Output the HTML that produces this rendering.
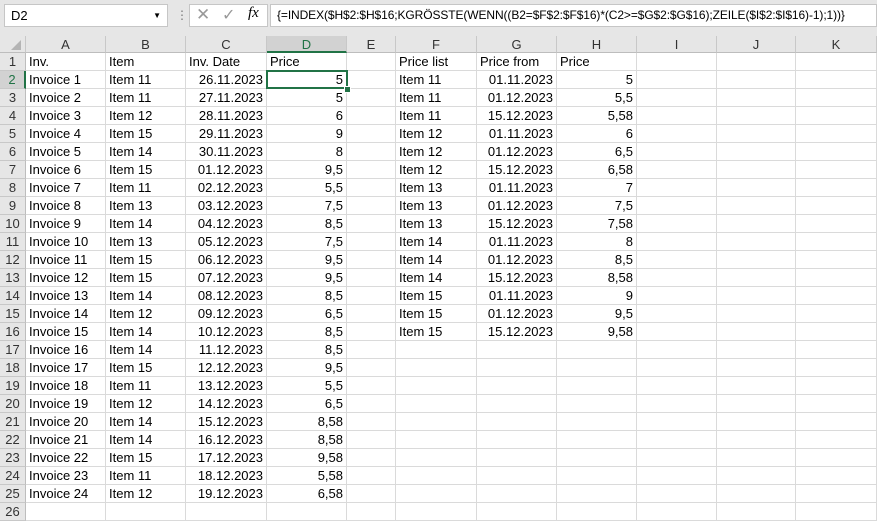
<!DOCTYPE html><html><head><style>
body{margin:0;width:877px;height:519px;overflow:hidden;background:#fff;font-family:"Liberation Sans",Calibri,sans-serif;position:relative}
.top{position:absolute;left:0;top:0;width:877px;height:36px;background:#e6e6e6}
.nb{position:absolute;left:4px;top:4px;width:164px;height:23px;background:#fff;border:1px solid #c6c6c6;box-sizing:border-box;font-size:13px;line-height:21px;padding-left:6px}
.fx{position:absolute;left:189px;top:4px;width:79px;height:23px;background:#fff;border:1px solid #c6c6c6;box-sizing:border-box}
.fb{position:absolute;left:270px;top:4px;width:607px;height:23px;background:#fff;border:1px solid #c6c6c6;box-sizing:border-box;font-size:12px;letter-spacing:-0.1px;line-height:21px;padding-left:6px;white-space:nowrap;overflow:hidden}
.ch{position:absolute;top:36px;height:17px;background:#e6e6e6;border-right:1px solid #c8c8c8;border-bottom:1px solid #bdbdbd;box-sizing:border-box;text-align:center;font-size:13px;line-height:17px;color:#333}
.rh{position:absolute;left:0;width:26px;height:18px;background:#e6e6e6;border-bottom:1px solid #c8c8c8;border-right:1px solid #bdbdbd;box-sizing:border-box;text-align:center;font-size:13px;line-height:18px;color:#333}
.c{position:absolute;height:18px;border-right:1px solid #dadada;border-bottom:1px solid #dadada;box-sizing:border-box;font-size:13px;line-height:18px;padding:0 3px;white-space:nowrap;overflow:hidden}
.r{text-align:right}
</style></head><body>
<div class="top"></div>
<div class="nb">D2<span style="position:absolute;right:6px;top:0;font-size:8px">▼</span></div>
<div style="position:absolute;left:176px;top:8px;font-size:12px;color:#777">⋮</div>
<div class="fx"><span style="position:absolute;left:6px;top:0;font-size:17px;color:#999">✕</span><span style="position:absolute;left:32px;top:0;font-size:16px;color:#999">✓</span><span style="position:absolute;left:58px;top:0;font-size:15px;font-style:italic;font-family:'Liberation Serif',serif">fx</span></div>
<div class="fb">{=INDEX($H$2:$H$16;KGRÖSSTE(WENN((B2=$F$2:$F$16)*(C2&gt;=$G$2:$G$16);ZEILE($I$2:$I$16)-1);1))}</div>
<div id="g"></div>
<script>
var cols=[["A",26,106],["B",106,186],["C",186,267],["D",267,347],["E",347,396],["F",396,477],["G",477,557],["H",557,637],["I",637,717],["J",717,796],["K",796,877]];
var h='<div class="ch" style="left:0;width:26px"><svg width="26" height="17" style="position:absolute;left:0;top:0"><path d="M21 4 L21 14 L11 14 Z" fill="#b4b4b4"/></svg></div>';
cols.forEach(function(c){var s=c[0]=="D"?"background:#d2d2d2;border-bottom:2px solid #217346;color:#217346;":"";h+='<div class="ch" style="left:'+c[1]+'px;width:'+(c[2]-c[1])+'px;'+s+'">'+c[0]+'</div>';});
var items=[11,11,12,15,14,15,11,13,14,13,15,15,14,12,14,14,15,11,12,14,14,15,11,12];
var prices=["5","5","6","9","8","9,5","5,5","7,5","8,5","7,5","9,5","9,5","8,5","6,5","8,5","8,5","9,5","5,5","6,5","8,58","8,58","9,58","5,58","6,58"];
var dates=["26.11.2023","27.11.2023","28.11.2023","29.11.2023","30.11.2023"];
for(var i=1;i<=19;i++)dates.push((i<10?"0":"")+i+".12.2023");
var pl=[];var pd=["01.11.2023","01.12.2023","15.12.2023"],pp=[["5","5,5","5,58"],["6","6,5","6,58"],["7","7,5","7,58"],["8","8,5","8,58"],["9","9,5","9,58"]];
for(var k=0;k<5;k++)for(var j=0;j<3;j++)pl.push(["Item "+(11+k),pd[j],pp[k][j]]);
for(var r=1;r<=26;r++){var t=53+(r-1)*18;
h+='<div class="rh" style="top:'+t+'px;'+(r==2?'background:#d2d2d2;border-right:2px solid #217346;color:#217346;':'')+'">'+r+'</div>';
var v=["","","","","","","","","","",""],al=[0,0,1,1,0,0,1,1,0,0,0];
if(r==1){v=["Inv.","Item","Inv. Date","Price","","Price list","Price from","Price","","",""];al=[0,0,0,0,0,0,0,0,0,0,0];}
else if(r<=25){v[0]="Invoice "+(r-1);v[1]="Item "+items[r-2];v[2]=dates[r-2];v[3]=prices[r-2];if(r<=16){v[5]=pl[r-2][0];v[6]=pl[r-2][1];v[7]=pl[r-2][2];}}
cols.forEach(function(c,ci){h+='<div class="c'+(al[ci]?' r':'')+'" style="top:'+t+'px;left:'+c[1]+'px;width:'+(c[2]-c[1])+'px">'+v[ci]+'</div>';});}
h+='<div style="position:absolute;left:266px;top:70px;width:82px;height:19px;border:2px solid #217346;box-sizing:border-box"></div><div style="position:absolute;left:344px;top:86px;width:5px;height:5px;background:#217346;border:1px solid #fff"></div>';
document.getElementById("g").innerHTML=h;
</script>
</body></html>
